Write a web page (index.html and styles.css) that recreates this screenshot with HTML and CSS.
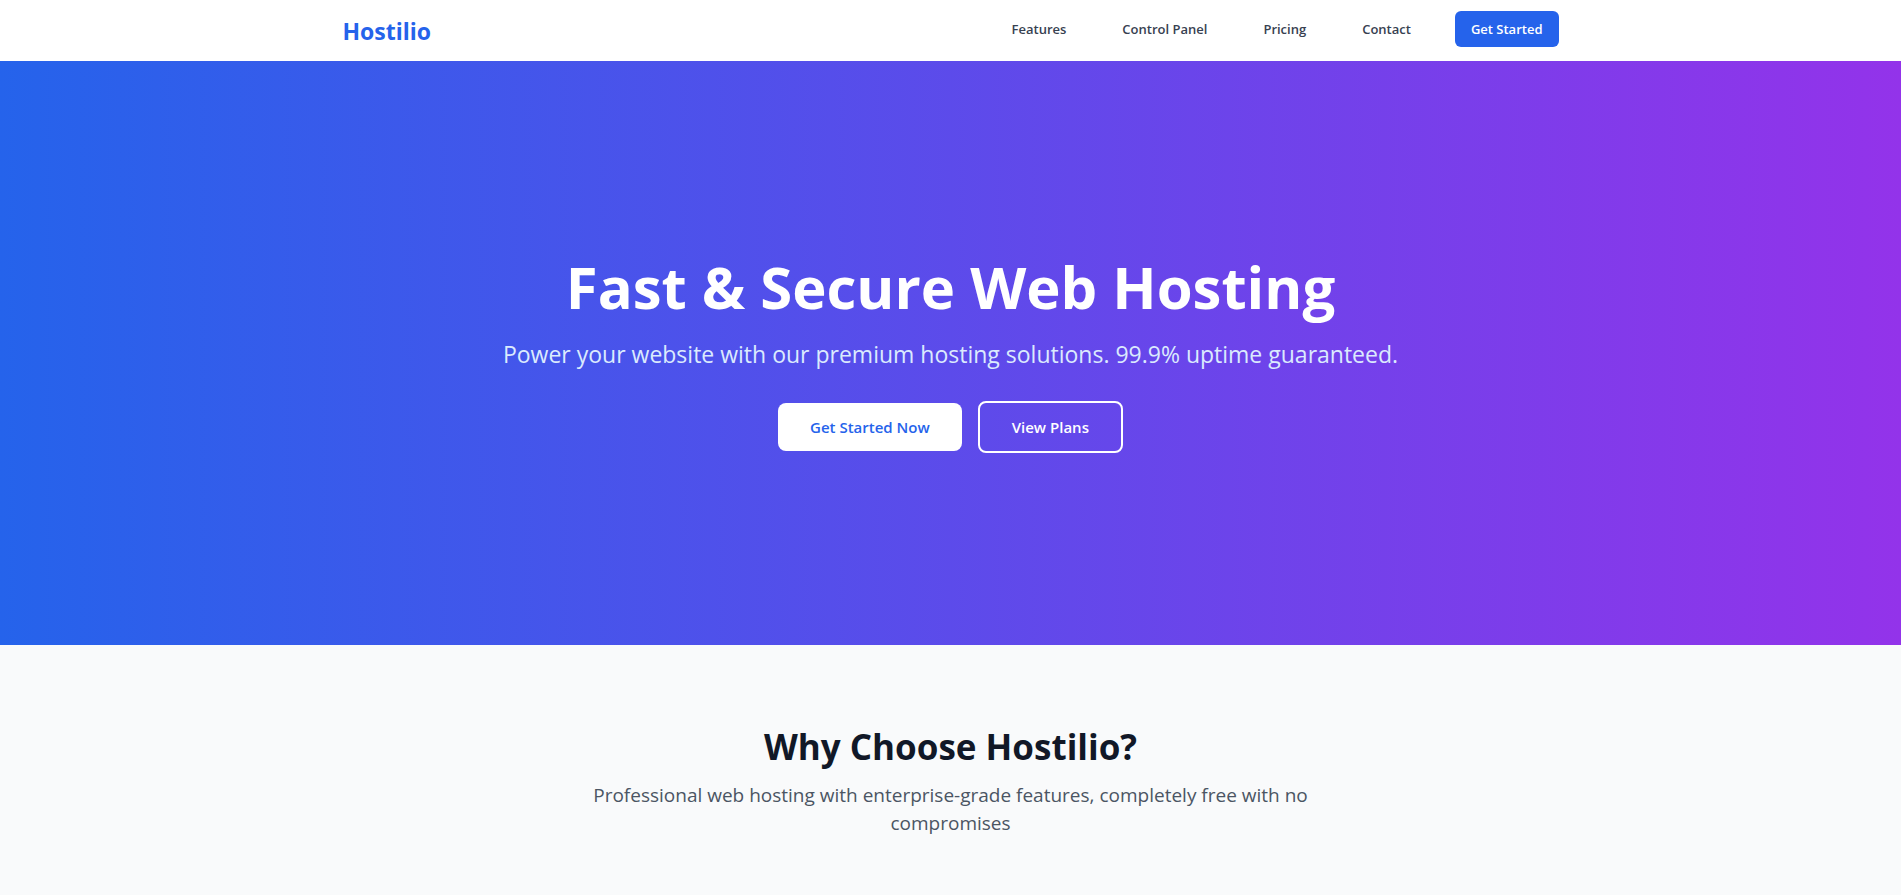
FILE: index.html
```html
<!DOCTYPE html>
<html lang="en">
<head>
<meta charset="utf-8">
<meta name="viewport" content="width=device-width, initial-scale=1">
<title>Hostilio</title>
<link rel="stylesheet" href="styles.css">
</head>
<body>
<header class="header">
  <div class="container header-inner">
    <a class="logo" href="#">Hostilio</a>
    <nav class="nav">
      <a class="nav-link" href="#features">Features</a>
      <a class="nav-link" href="#panel">Control Panel</a>
      <a class="nav-link" href="#pricing">Pricing</a>
      <a class="nav-link" href="#contact">Contact</a>
      <button class="nav-button" type="button">Get Started</button>
    </nav>
  </div>
</header>
<main>
  <section class="hero">
    <h1 class="hero-title">Fast &amp; Secure Web Hosting</h1>
    <p class="hero-text">Power your website with our premium hosting solutions. 99.9% uptime guaranteed.</p>
    <div class="hero-actions">
      <button class="button button-solid" type="button">Get Started Now</button>
      <button class="button button-outline" type="button">View Plans</button>
    </div>
  </section>
  <section class="features" id="features">
    <h2 class="features-title">Why Choose Hostilio?</h2>
    <p class="features-text">Professional web hosting with enterprise-grade features, completely free with no compromises</p>
  </section>
</main>
</body>
</html>
```
FILE: styles.css
```css
* {
  box-sizing: border-box;
}

body {
  margin: 0;
  background: #f9fafb;
  color: #111827;
  font-family: "Segoe UI", "Open Sans", "Noto Sans", sans-serif;
  line-height: 24px;
}

h1,
h2,
p {
  margin: 0;
}

a {
  color: inherit;
  text-decoration: none;
}

button {
  font-family: inherit;
  cursor: pointer;
}

.header {
  background: #ffffff;
}

.container {
  max-width: 1280px;
  margin: 0 auto;
  padding: 0 32px;
}

.header-inner {
  display: flex;
  align-items: center;
  justify-content: space-between;
  min-height: 61px;
}

.logo {
  color: #2563eb;
  font-size: 23px;
  font-weight: 700;
  line-height: 32px;
}

.nav {
  display: flex;
  align-items: center;
  gap: 32px;
  padding-bottom: 3px;
}

.nav-link {
  padding: 8px 12px;
  color: #374151;
  font-size: 13px;
  font-weight: 600;
  line-height: 20px;
}

.nav-button {
  padding: 8px 16px;
  border: 0;
  border-radius: 6px;
  background: #2563eb;
  color: #ffffff;
  font-size: 13px;
  font-weight: 600;
  line-height: 20px;
}

.hero {
  display: flex;
  flex-direction: column;
  align-items: center;
  padding: 192px 32px;
  background: linear-gradient(to right, #2563eb, #9333ea);
  color: #ffffff;
  text-align: center;
}

.hero-title {
  margin-bottom: 16px;
  font-size: 58px;
  font-weight: 700;
  line-height: 68px;
}

.hero-text {
  margin-bottom: 30px;
  color: #dbeafe;
  font-size: 23px;
  line-height: 34px;
}

.hero-actions {
  display: flex;
  align-items: center;
  gap: 16px;
}

.button {
  padding: 12px 32px;
  border: 0;
  border-radius: 8px;
  font-size: 15px;
  font-weight: 600;
  line-height: 24px;
}

.button-solid {
  background: #ffffff;
  color: #2563eb;
}

.button-outline {
  border: 2px solid #ffffff;
  background: transparent;
  color: #ffffff;
}

.features {
  padding: 80px 32px;
  text-align: center;
}

.features-title {
  margin-bottom: 12px;
  font-size: 35px;
  font-weight: 700;
  line-height: 44px;
}

.features-text {
  max-width: 768px;
  margin: 0 auto;
  color: #4b5563;
  font-size: 19px;
  line-height: 28px;
}
```
